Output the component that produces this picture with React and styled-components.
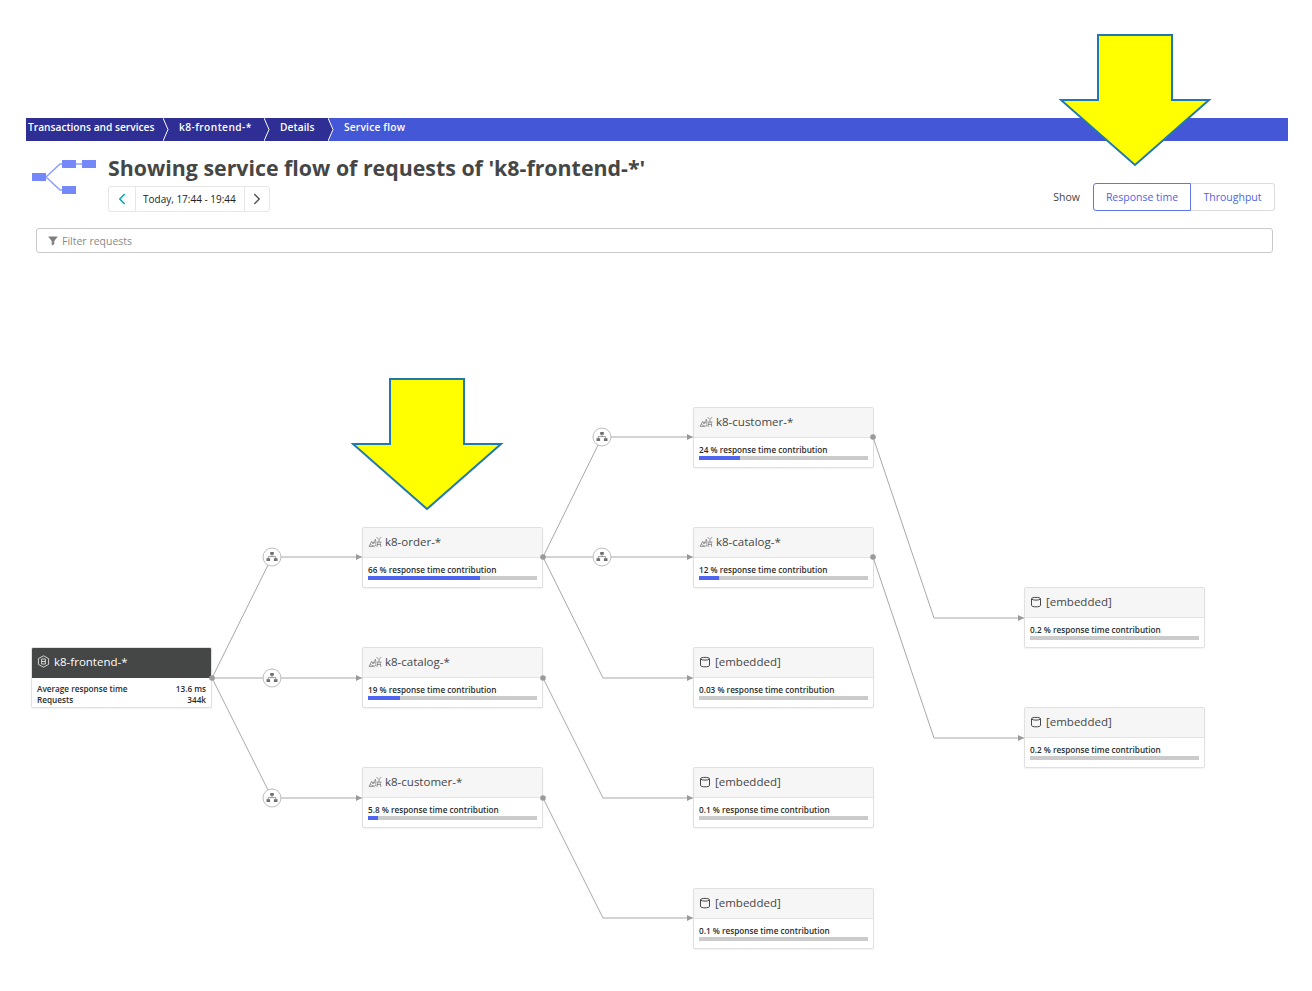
import styled, { createGlobalStyle } from 'styled-components'
import { ChevronLeft, ChevronRight } from 'lucide-react'

const GlobalStyle = createGlobalStyle`
  html, body {
    margin: 0;
    padding: 0;
    background: #fff;
  }
  body {
    font-family: 'Open Sans', 'Noto Sans', 'Liberation Sans', sans-serif;
    color: #454646;
  }
`

const Page = styled.div`
  position: relative;
  width: 1312px;
  height: 991px;
  padding-top: 118px;
  box-sizing: border-box;
  overflow: hidden;
`

const Breadcrumbs = styled.nav`
  display: flex;
  height: 23px;
  margin: 0 24px 0 26px;
  background: #4457d6;
`

const Crumb = styled.div`
  position: relative;
  display: flex;
  align-items: center;
  box-sizing: border-box;
  width: ${(p) => p.$width}px;
  padding-left: ${(p) => p.$pad}px;
  padding-bottom: 6px;
  background: ${(p) => (p.$current ? 'transparent' : '#2e2e94')};
  color: #fff;
  font-size: 10.2px;
  font-weight: 600;
  letter-spacing: ${(p) => p.$track || 0}px;
  white-space: nowrap;
`

const CrumbTip = styled.svg`
  position: absolute;
  top: 0;
  left: 100%;
  width: 6px;
  height: 23px;
  z-index: 1;
`

const Header = styled.div`
  display: flex;
  align-items: flex-start;
  margin: 13px 37px 0 32px;
`

const FlowLogo = styled.svg`
  flex: none;
  width: 64px;
  height: 38px;
  margin-top: 3px;
  margin-right: 12px;
`

const TitleBlock = styled.div`
  flex: 1;
  display: flex;
  flex-direction: column;
  gap: 4px;
`

const Title = styled.h1`
  margin: 0;
  height: 28px;
  font-size: 21.35px;
  line-height: 28px;
  font-weight: 700;
  color: #454646;
  white-space: nowrap;
`

const TimeNav = styled.div`
  display: flex;
  align-self: flex-start;
  height: 26px;
  border: 1px solid #e6e6e6;
  border-radius: 3px;
  box-sizing: border-box;
`

const TimeArrow = styled.div`
  display: flex;
  align-items: center;
  justify-content: center;
  width: ${(p) => p.$width}px;
  color: ${(p) => p.$color};
`

const TimeLabel = styled.div`
  display: flex;
  align-items: center;
  padding: 0 8px 0 7px;
  border-left: 1px solid #e6e6e6;
  border-right: 1px solid #e6e6e6;
  font-size: 10px;
  color: #222;
  white-space: nowrap;
`

const ShowGroup = styled.div`
  display: flex;
  align-items: center;
  margin-top: 29px;
`

const ShowLabel = styled.span`
  margin-right: 13px;
  font-size: 10.5px;
  color: #454646;
`

const Toggle = styled.div`
  display: flex;
  height: 28px;
  box-sizing: border-box;
`

const ToggleOption = styled.div`
  display: flex;
  align-items: center;
  justify-content: center;
  box-sizing: border-box;
  width: ${(p) => p.$width}px;
  font-size: 10.5px;
  color: #4f65e8;
  border: 1px solid ${(p) => (p.$active ? '#5f75f0' : '#dcdcdc')};
  border-left-width: ${(p) => (p.$active ? 1 : 0)}px;
  border-radius: ${(p) => (p.$active ? '3px 0 0 3px' : '0 3px 3px 0')};
`

const FilterBar = styled.div`
  display: flex;
  align-items: center;
  gap: 4px;
  box-sizing: border-box;
  height: 25px;
  margin: 16px 39px 0 36px;
  padding-left: 11px;
  border: 1px solid #c9c9c9;
  border-radius: 3px;
  font-size: 10.5px;
  color: #8a8a8a;
`

const Canvas = styled.div`
  position: relative;
  height: 631px;
  margin-top: 107px;
`

const Edges = styled.svg`
  position: absolute;
  top: 0;
  left: 0;
  width: 1312px;
  height: 631px;
  z-index: 1;
`

const NodeBox = styled.div`
  position: absolute;
  left: ${(p) => p.$x}px;
  top: ${(p) => p.$y - 360}px;
  width: 181px;
  height: 61px;
  box-sizing: border-box;
  background: #fff;
  border: 1px solid #e0e0e0;
  border-radius: 2px;
  box-shadow: 0 1px 2px rgba(0, 0, 0, 0.06);
  overflow: hidden;
`

const NodeHead = styled.div`
  display: flex;
  align-items: center;
  gap: ${(p) => p.$gap}px;
  box-sizing: border-box;
  height: 30px;
  padding: 0 0 2px 5px;
  background: ${(p) => (p.$dark ? '#454646' : '#f6f6f6')};
  border-bottom: 1px solid ${(p) => (p.$dark ? '#454646' : '#e4e4e4')};
  color: ${(p) => (p.$dark ? '#fff' : '#454646')};
  font-size: 11.5px;
  white-space: nowrap;
`

const NodeBody = styled.div`
  padding: 6px 5px 0;
`

const Contribution = styled.div`
  font-size: 8.2px;
  line-height: 11px;
  font-weight: 600;
  color: #2b2b2b;
  white-space: nowrap;
`

const Bar = styled.div`
  height: 4px;
  margin-top: 1px;
  background: #cbcbcb;
`

const BarFill = styled.div`
  height: 100%;
  background: #4f65f0;
`

const StatRow = styled.div`
  display: flex;
  justify-content: space-between;
  font-size: 8.2px;
  line-height: 11px;
  font-weight: 600;
  color: #2b2b2b;
`

const FrontendBody = styled.div`
  padding: 5px 5px 0;
`

const Callout = styled.svg`
  position: absolute;
  left: ${(p) => p.$x}px;
  top: ${(p) => p.$y}px;
  width: 154px;
  height: 134px;
  z-index: 2;
`

const nodes = [
  { x: 362, y: 527, kind: 'service', name: 'k8-order-*', pct: 66, label: '66 % response time contribution' },
  { x: 362, y: 647, kind: 'service', name: 'k8-catalog-*', pct: 19, label: '19 % response time contribution' },
  { x: 362, y: 767, kind: 'service', name: 'k8-customer-*', pct: 5.8, label: '5.8 % response time contribution' },
  { x: 693, y: 407, kind: 'service', name: 'k8-customer-*', pct: 24, label: '24 % response time contribution' },
  { x: 693, y: 527, kind: 'service', name: 'k8-catalog-*', pct: 12, label: '12 % response time contribution' },
  { x: 693, y: 647, kind: 'db', name: '[embedded]', pct: 0, label: '0.03 % response time contribution' },
  { x: 693, y: 767, kind: 'db', name: '[embedded]', pct: 0, label: '0.1 % response time contribution' },
  { x: 693, y: 888, kind: 'db', name: '[embedded]', pct: 0, label: '0.1 % response time contribution' },
  { x: 1024, y: 587, kind: 'db', name: '[embedded]', pct: 0, label: '0.2 % response time contribution' },
  { x: 1024, y: 707, kind: 'db', name: '[embedded]', pct: 0, label: '0.2 % response time contribution' },
]

// polylines in page coordinates, last point takes the arrow head
const edges = [
  [[212, 678], [272, 557], [362, 557]],
  [[212, 678], [362, 678]],
  [[212, 678], [272, 798], [362, 798]],
  [[543, 557], [602, 437], [693, 437]],
  [[543, 557], [693, 557]],
  [[543, 557], [603, 678], [693, 678]],
  [[543, 678], [603, 798], [693, 798]],
  [[543, 798], [603, 918], [693, 918]],
  [[873, 437], [934, 618], [1024, 618]],
  [[873, 557], [934, 738], [1024, 738]],
]

const hubs = [[272, 557], [272, 678], [272, 798], [602, 437], [602, 557]]
const dots = [[212, 678], [543, 557], [543, 678], [543, 798], [873, 437], [873, 557]]

function ServiceIcon() {
  return (
    <svg width="14" height="12" viewBox="0 0 14 12" fill="none" stroke="#777" strokeWidth="0.7">
      <path d="M1 10.5 L3.5 5.5 L5 8 L7.5 3 L8 9.5 L5.5 10.5 Z" />
      <path d="M2 8.5 L6 10 M4 6 L7 7" />
      <path d="M8.5 1 L11 3.5 L13.2 1 M11 3.5 L11 6 M8.5 6 L13.5 6 M9 8.5 L13 8.5 M10 6 L9 11 M12 6 L12.8 11" />
    </svg>
  )
}

function DbIcon() {
  return (
    <svg width="12" height="12" viewBox="0 0 12 12" fill="none" stroke="#454646" strokeWidth="1">
      <path d="M1.5 2.8 C1.5 0.9 10.5 0.9 10.5 2.8 L10.5 9.4 C10.5 11.3 1.5 11.3 1.5 9.4 Z" />
      <path d="M1.5 3 C3 4.5 9 4.5 10.5 3" />
    </svg>
  )
}

function HexIcon() {
  return (
    <svg width="13" height="13" viewBox="0 0 13 13" fill="none" stroke="#e2e2e2" strokeWidth="0.9">
      <path d="M6.5 0.8 L11.6 3.6 L11.6 9.4 L6.5 12.2 L1.4 9.4 L1.4 3.6 Z" />
      <path d="M4.6 4 H8.4 V9 H4.6 Z M4.6 6.5 H8.4" />
    </svg>
  )
}

function FilterIcon() {
  return (
    <svg width="10" height="10" viewBox="0 0 10 10" fill="none" stroke="#7d7d7d" strokeWidth="1">
      <path d="M0.5 1 H9.5" />
      <path d="M1.5 1.5 L4.2 5 V9 L5.8 8 V5 L8.5 1.5 Z" fill="#7d7d7d" />
    </svg>
  )
}

function Hub({ x, y }) {
  const cy = y - 360
  return (
    <g transform={`translate(${x} ${cy})`}>
      <circle r="9" fill="#fff" stroke="#bdbdbd" strokeWidth="1" />
      <g fill="#6f6f6f">
        <rect x="-1.8" y="-5" width="3.6" height="2.8" />
        <rect x="-5.5" y="1.2" width="3.6" height="2.8" />
        <rect x="1.9" y="1.2" width="3.6" height="2.8" />
      </g>
      <path d="M0 -2.2 V-0.4 M-3.7 1.2 V-0.4 H3.7 V1.2" fill="none" stroke="#6f6f6f" strokeWidth="0.7" />
    </g>
  )
}

function Edge({ points }) {
  const last = points[points.length - 1]
  const y = last[1] - 360
  return (
    <g>
      <polyline
        points={points.map(([px, py]) => `${px},${py - 360}`).join(' ')}
        fill="none"
        stroke="#a8a8a8"
        strokeWidth="1"
      />
      <path d={`M${last[0]} ${y} l-6 -3 v6 Z`} fill="#9a9a9a" />
    </g>
  )
}

function Node({ node }) {
  const service = node.kind === 'service'
  return (
    <NodeBox $x={node.x} $y={node.y}>
      <NodeHead $gap={service ? 3 : 4}>
        {service ? <ServiceIcon /> : <DbIcon />}
        <span>{node.name}</span>
      </NodeHead>
      <NodeBody>
        <Contribution>{node.label}</Contribution>
        <Bar>
          <BarFill style={{ width: `${node.pct}%` }} />
        </Bar>
      </NodeBody>
    </NodeBox>
  )
}

function Arrow({ x, y }) {
  return (
    <Callout $x={x} $y={y} viewBox="0 0 154 134">
      <path
        d="M39 1 H113 V66 H150 L76 131 L2 66 H39 Z"
        fill="#ffff00"
        stroke="#1f78b4"
        strokeWidth="2"
      />
    </Callout>
  )
}

function Tip() {
  return (
    <CrumbTip viewBox="0 0 6 23">
      <path d="M0 0 L5 11.5 L0 23 Z" fill="#2e2e94" />
      <path d="M0 0 L5 11.5 L0 23" fill="none" stroke="#fff" />
    </CrumbTip>
  )
}

export default function App() {
  return (
    <Page>
      <GlobalStyle />
      <Breadcrumbs>
        <Crumb $width={137} $pad={2}>
          Transactions and services
          <Tip />
        </Crumb>
        <Crumb $width={101} $pad={16} $track={0.42}>
          k8-frontend-*
          <Tip />
        </Crumb>
        <Crumb $width={64} $pad={16} $track={0.1}>
          Details
          <Tip />
        </Crumb>
        <Crumb $width={120} $pad={16} $track={0.2} $current>
          Service flow
        </Crumb>
      </Breadcrumbs>

      <Header>
        <FlowLogo viewBox="0 0 64 38">
          <path d="M14 20 L28 7 H52 M14 20 L28 33 H38" fill="none" stroke="#8fa0fb" strokeWidth="1.6" />
          <g fill="#7488fa">
            <rect x="0" y="16" width="14" height="8" />
            <rect x="30" y="3" width="14" height="8" />
            <rect x="50" y="3" width="14" height="8" />
            <rect x="30" y="29" width="14" height="8" />
          </g>
        </FlowLogo>
        <TitleBlock>
          <Title>Showing service flow of requests of 'k8-frontend-*'</Title>
          <TimeNav>
            <TimeArrow $width={26} $color="#00a1b2">
              <ChevronLeft size={18} strokeWidth={2} />
            </TimeArrow>
            <TimeLabel>Today, 17:44 - 19:44</TimeLabel>
            <TimeArrow $width={24} $color="#555">
              <ChevronRight size={18} strokeWidth={2} />
            </TimeArrow>
          </TimeNav>
        </TitleBlock>
        <ShowGroup>
          <ShowLabel>Show</ShowLabel>
          <Toggle>
            <ToggleOption $active $width={98}>Response time</ToggleOption>
            <ToggleOption $width={84}>Throughput</ToggleOption>
          </Toggle>
        </ShowGroup>
      </Header>

      <FilterBar>
        <FilterIcon />
        Filter requests
      </FilterBar>

      <Canvas>
        <Edges viewBox="0 0 1312 631">
          {edges.map((points, i) => (
            <Edge key={i} points={points} />
          ))}
          {dots.map(([x, y], i) => (
            <circle key={i} cx={x} cy={y - 360} r="2.8" fill="#9a9a9a" />
          ))}
          {hubs.map(([x, y], i) => (
            <Hub key={i} x={x} y={y} />
          ))}
        </Edges>

        <NodeBox $x={31} $y={647}>
          <NodeHead $dark $gap={4}>
            <HexIcon />
            <span>k8-frontend-*</span>
          </NodeHead>
          <FrontendBody>
            <StatRow>
              <span>Average response time</span>
              <span>13.6 ms</span>
            </StatRow>
            <StatRow>
              <span>Requests</span>
              <span>344k</span>
            </StatRow>
          </FrontendBody>
        </NodeBox>

        {nodes.map((node, i) => (
          <Node key={i} node={node} />
        ))}
      </Canvas>

      <Arrow x={1059} y={34} />
      <Arrow x={351} y={378} />
    </Page>
  )
}
